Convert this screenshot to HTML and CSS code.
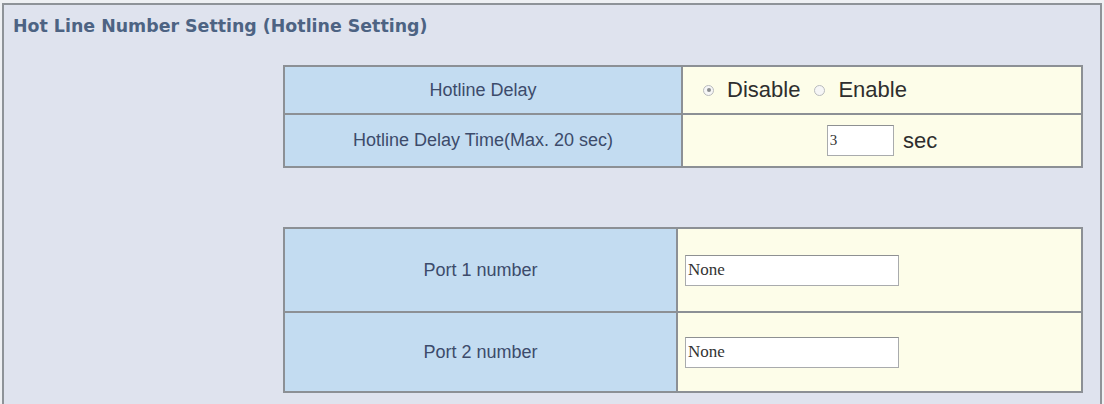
FILE: index.html
```html
<!DOCTYPE html>
<html lang="en">
<head>
  <meta charset="UTF-8">
  <title>Hotline Setting</title>
  <link rel="stylesheet" href="styles.css">
</head>
<body>
  <div class="panel">
    <h2 class="panel__title">Hot Line Number Setting (Hotline Setting)</h2>

    <div class="panel__body">
      <!-- HOTLINE DELAY -->
      <table class="setting setting--delay">
        <tr class="setting__row setting__row--short">
          <th class="setting__label">Hotline Delay</th>
          <td class="setting__value">
            <div class="choices">
              <label class="choice"><input type="radio" name="hotline_delay" value="0" checked> Disable</label>
              <label class="choice"><input type="radio" name="hotline_delay" value="1"> Enable</label>
            </div>
          </td>
        </tr>
        <tr class="setting__row setting__row--mid">
          <th class="setting__label">Hotline Delay Time(Max. 20 sec)</th>
          <td class="setting__value setting__value--center">
            <input class="field field--sec" type="text" name="hotline_delay_time" value="3">
            <span class="unit">sec</span>
          </td>
        </tr>
      </table>

      <!-- PORT NUMBERS -->
      <table class="setting setting--ports">
        <tr class="setting__row setting__row--tall">
          <th class="setting__label">Port 1 number</th>
          <td class="setting__value">
            <input class="field field--port" type="text" name="port1_number" value="None">
          </td>
        </tr>
        <tr class="setting__row setting__row--tall2">
          <th class="setting__label">Port 2 number</th>
          <td class="setting__value">
            <input class="field field--port" type="text" name="port2_number" value="None">
          </td>
        </tr>
      </table>
    </div>
  </div>
</body>
</html>
```

FILE: styles.css
```css
:root {
  --pageBg: #eef0f3;
  --panelBg: #dfe3ee;
  --panelBorder: #8e9398;
  --titleColor: #4d6383;
  --labelBg: #c3dcf1;
  --labelColor: #3c4b6b;
  --valueBg: #fdfde9;
  --valueColor: #2e2e2e;
  --cellBorder: #8c9095;
}

* {
  box-sizing: border-box;
}

html,
body {
  margin: 0;
  height: 100%;
  overflow: hidden;
}

body {
  background-color: var(--pageBg);
  font-family: "Liberation Sans", Arial, sans-serif;
}

.panel {
  margin: 3px 2px 0 2px;
  min-height: 430px;
  background-color: var(--panelBg);
  border: 2px solid var(--panelBorder);
  border-bottom: 0;
}

.panel__title {
  margin: 0;
  padding: 11px 0 0 9px;
  height: 33px;
  font-family: "DejaVu Sans", Verdana, sans-serif;
  font-size: 17.4px;
  font-weight: 700;
  line-height: 21px;
  color: var(--titleColor);
}

.panel__body {
  padding-left: 279px;
}

.setting {
  border-collapse: collapse;
  width: 800px;
  table-layout: fixed;
}

.setting--delay {
  margin-top: 27px;
}

.setting--ports {
  margin-top: 59px;
}

.setting th,
.setting td {
  border: 2px solid var(--cellBorder);
  padding: 0;
}

.setting--delay .setting__label {
  width: 398px;
}

.setting--ports .setting__label {
  width: 393px;
}

.setting__row--short {
  height: 48px;
}

.setting__row--mid {
  height: 53px;
}

.setting__row--tall {
  height: 84px;
}

.setting__row--tall2 {
  height: 80px;
}

.setting__label {
  background-color: var(--labelBg);
  color: var(--labelColor);
  font-size: 18px;
  font-weight: 400;
  text-align: center;
}

.setting__value {
  background-color: var(--valueBg);
  color: var(--valueColor);
  font-size: 22px;
}

.setting .setting__value {
  padding-left: 7px;
}

.setting .setting__value--center {
  text-align: center;
  padding-left: 0;
}

.choices {
  display: flex;
  align-items: center;
  gap: 14px;
  padding-left: 13px;
}

.choice {
  display: flex;
  align-items: center;
  gap: 13px;
}

.choice input {
  -webkit-appearance: none;
  appearance: none;
  width: 11px;
  height: 11px;
  margin: 0;
  border: 1px solid #b9bbbd;
  border-radius: 50%;
  background: #f6f6f6;
  display: grid;
  place-items: center;
}

.choice input:checked::after {
  content: "";
  width: 4px;
  height: 4px;
  border-radius: 50%;
  background: #8a8c8e;
}

.field {
  border: 1px solid #a9abad;
  border-top-color: #8e9092;
  background: #fff;
  margin: 0;
  padding: 0 2px;
  font-family: "Liberation Serif", "Times New Roman", serif;
  font-size: 17px;
  color: #333;
  vertical-align: middle;
  outline: 0;
}

.field--sec {
  width: 67px;
  height: 31px;
  font-size: 15px;
}

.field--port {
  width: 214px;
  height: 31px;
}

.unit {
  vertical-align: middle;
  margin-left: 3px;
}
```
